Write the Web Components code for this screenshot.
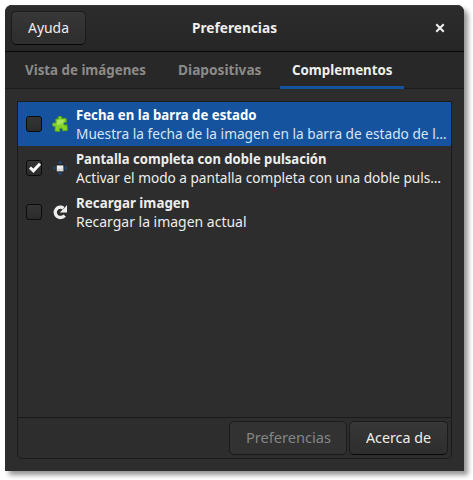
<!DOCTYPE html>
<html lang="es">
<head>
<meta charset="utf-8">
<title>Preferencias</title>
<style>
html,body{margin:0;background:#fff;font-family:"Noto Sans","Open Sans",sans-serif;font-size:14.7px;color:#eeeeec}
body{padding:5px 9px 9px 5px;box-sizing:border-box;width:473px;height:480px;overflow:hidden}
</style>
</head>
<body>
<prefs-window>
  <header-bar slot="header">
    <gtk-button slot="start" style="--w:75px"><fit-text w="41">Ayuda</fit-text></gtk-button>
    <fit-text w="85" bold>Preferencias</fit-text>
  </header-bar>
  <tab-bar slot="tabs">
    <tab-item style="--w:160px;--pad:20px"><fit-text w="121" bold>Vista de imágenes</fit-text></tab-item>
    <tab-item style="--w:115px;--pad:12.5px"><fit-text w="83.5" bold>Diapositivas</fit-text></tab-item>
    <tab-item active style="--w:124px;--pad:12px"><fit-text w="100.5" bold>Complementos</fit-text></tab-item>
  </tab-bar>
  <plugin-list>
    <plugin-row selected icon="puzzle"><fit-text w="180.5" bold>Fecha en la barra de estado</fit-text><fit-text slot="detail" w="370.5">Muestra la fecha de la imagen en la barra de estado de l…</fit-text></plugin-row>
    <plugin-row checked icon="full"><fit-text w="250.5" bold>Pantalla completa con doble pulsación</fit-text><fit-text slot="detail" w="365">Activar el modo a pantalla completa con una doble puls…</fit-text></plugin-row>
    <plugin-row icon="reload"><fit-text w="113.5" bold>Recargar imagen</fit-text><fit-text slot="detail" w="170.5">Recargar la imagen actual</fit-text></plugin-row>
    <gtk-button slot="actions" disabled style="--w:118px"><fit-text w="85">Preferencias</fit-text></gtk-button>
    <gtk-button slot="actions" style="--w:99px"><fit-text w="65">Acerca de</fit-text></gtk-button>
  </plugin-list>
</prefs-window>
<script>
const define=(name,html,ready)=>customElements.define(name,class extends HTMLElement{
  constructor(){super();this.attachShadow({mode:'open'}).innerHTML=html}
  connectedCallback(){if(ready)ready(this,this.shadowRoot)}
});

define('fit-text',`<style>
:host{display:block;line-height:18px;height:20px;white-space:nowrap;flex:none}
:host([bold]){font-weight:700}
span{display:inline-block;transform-origin:0 50%}
</style><span><slot></slot></span>`,(el,root)=>{
  const w=+el.getAttribute('w'),span=root.querySelector('span');
  span.style.transform='scaleX('+w/span.getBoundingClientRect().width+')';
  el.style.width=w+'px';
});

define('prefs-window',`<style>
:host{display:flex;flex-direction:column;width:459px;height:466px;background:#2d2d2d;border-radius:7px 7px 0 0;box-shadow:4px 4px 5px rgba(0,0,0,.42)}
main{flex:1;padding:12px;display:flex;min-height:0}
</style><slot name="header"></slot><slot name="tabs"></slot><main><slot></slot></main>`);

define('header-bar',`<style>
:host{display:grid;grid-template-columns:1fr auto 1fr;align-items:center;box-sizing:border-box;height:47px;padding:0 6px;border-bottom:1px solid #070707;border-radius:7px 7px 0 0;background:linear-gradient(#2c2c2c,#262626);box-shadow:inset 0 1px #383838}
svg{justify-self:end;margin-right:13px}
</style><slot name="start"></slot><slot></slot>
<svg width="10" height="10" viewBox="0 0 10 10"><path d="M2 2 8 8M8 2 2 8" stroke="#eeeeec" stroke-width="2.1" stroke-linecap="square"/></svg>`);

define('gtk-button',`<style>
:host{display:flex;align-items:center;justify-content:center;box-sizing:border-box;width:var(--w);height:34px;border:1px solid #1b1b1b;border-bottom-color:#070707;border-radius:5px;background:linear-gradient(#373737,#303030 70%,#2e2e2e);box-shadow:inset 0 1px rgba(255,255,255,.025)}
:host([disabled]){color:#858585;background:#323232;border-color:#1b1b1b;box-shadow:none}
</style><slot></slot>`);

define('tab-bar',`<style>
:host{display:flex;box-sizing:border-box;height:37px;background:#282828;border-bottom:1px solid #1b1b1b}
</style><slot></slot>`);

define('tab-item',`<style>
:host{display:flex;box-sizing:border-box;width:var(--w);height:37px;padding:8px 0 0 var(--pad);color:#8b8b8a}
:host([active]){color:#eeeeec;box-shadow:inset 0 -3px #15539e}
</style><slot></slot>`);

define('plugin-list',`<style>
:host{display:flex;flex-direction:column;box-sizing:border-box;width:435px;height:358px;border:1px solid #1b1b1b;border-radius:0 0 5px 5px}
section{flex:1}
footer{display:flex;justify-content:flex-end;gap:2px;border-top:1px solid #1b1b1b;padding:3px}
</style><section><slot></slot></section><footer><slot name="actions"></slot></footer>`);

const icons={
puzzle:`<path d="M3.8 3.2 6.6 2.7 6.1.9 8 .3 9.8 1 9.5 2.7 14 2.5 14.4 6.2 12.7 6.1 11.6 7.4 12.1 8.7 13 9.2 15 8.8 15.3 14.4 10.9 14.8 10.6 13.1 9.2 12 7.5 12.6 7.6 15.4 3 15 3.4 10.4 1.3 10.3.4 8.3 1.2 6.9 4 7.2Z" fill="#83d52b" stroke="#5fae10" stroke-width=".9"/><path d="M5 4.3 8 3.7 13 3.6 10 8 5 9Z" fill="#a7e65c"/>`,
full:`<path d="M8 .6 10.4 3.5H5.6ZM8 15.4 10.4 12.5H5.6ZM.6 8 3.5 5.6V10.4ZM15.4 8 12.5 5.6V10.4Z" fill="#204a87"/><path d="M4.3 5H11.8V11.6H4.3Z" fill="#eeeeec" stroke="#161616" stroke-width=".8"/><path d="M5 9.5 7 8.2 9 9.2 11.2 7V11.2H5Z" fill="#d6d6d4"/>`,
reload:`<path d="M11.6 4.2A5.2 5.2 0 1 0 12.6 11.4" fill="none" stroke="#eeeeec" stroke-width="3.3"/><path d="M15 1V8.4H7.8L10.2 6 12.5 4Z" fill="#eeeeec"/>`};

define('plugin-row',`<style>
:host{display:flex;height:44px;color:#eeeeec;overflow:hidden}
:host([selected]){background:#15539e;color:#fff}
i{box-sizing:border-box;flex:none;width:16px;height:16px;margin:14px 10px 0 8px;border:1px solid #0b0b0b;border-radius:3px;background:linear-gradient(#353535,#2b2b2b);display:flex;overflow:visible}
i svg{display:none;overflow:visible;flex:none}
:host([checked]) i svg{display:block}
.icon{flex:none;width:16px;height:16px;margin:14px 8.4px 0 0}
.texts{padding-top:3px}
slot[name]{display:block;margin-top:-1px}
:host([selected]) slot[name]{color:#d9e4f1}
</style><i><svg width="14" height="14" viewBox="0 0 14 14"><path d="M3 6.5 6.4 9.8 13 2.8" fill="none" stroke="#fff" stroke-width="3"/></svg></i><svg class="icon" viewBox="0 0 16 16"></svg><div class="texts"><slot></slot><slot name="detail"></slot></div>`,(el,root)=>{
  root.querySelector('.icon').innerHTML=icons[el.getAttribute('icon')];
});
</script>
</body>
</html>
